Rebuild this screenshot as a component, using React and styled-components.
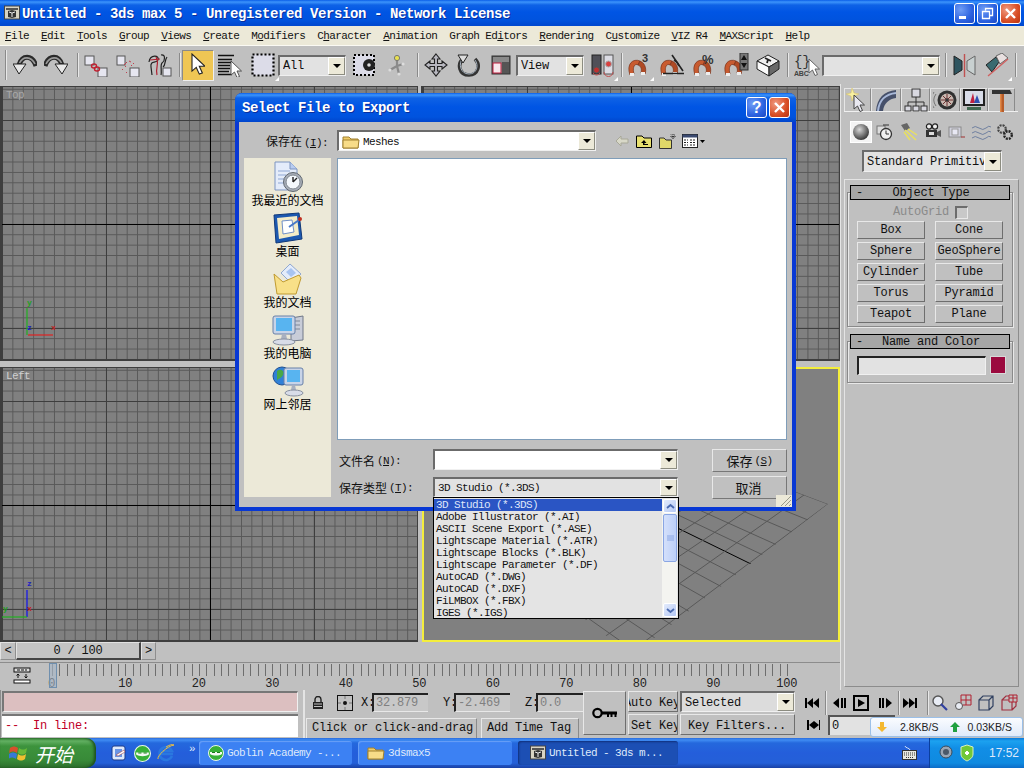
import styled, { createGlobalStyle } from "styled-components"

const mono = `"Liberation Mono", "Noto Sans CJK SC", monospace`
const cjk = `"Noto Sans CJK SC", "Liberation Sans", sans-serif`
const panel = "#c0c0c0"

const Global = createGlobalStyle`
  html, body { margin: 0; padding: 0; background: ${panel}; }
  * { box-sizing: border-box; }
  svg { display: block; }
`

const Screen = styled.div`
  position: relative;
  width: 1024px;
  height: 768px;
  overflow: hidden;
  display: flex;
  flex-direction: column;
  background: ${panel};
  font-family: ${mono};
  font-size: 12px;
  letter-spacing: -0.2px;
  color: #111;
`

/* ---------- window chrome ---------- */
const TitleBar = styled.div`
  flex: none;
  height: 26px;
  display: flex;
  align-items: center;
  padding: 0 3px 0 4px;
  background: linear-gradient(#0a5ee8 0, #3c94fb 2px, #0e62e6 5px, #0055e4 12px, #0053de 20px, #0049d0 25px);
`
const TitleText = styled.span`
  flex: 1;
  margin: 1px 0 0 2px;
  color: #fff;
  font-weight: 700;
  font-size: 14px;
  letter-spacing: -0.4px;
  white-space: pre;
  text-shadow: 1px 1px 0 #0a2f9c;
`
const WinButton = styled.div`
  width: 21px;
  height: 21px;
  margin-left: ${(p) => p.$ml || 2}px;
  border: 1px solid #fff;
  border-radius: 3px;
  display: flex;
  align-items: center;
  justify-content: center;
  color: #fff;
  font: 700 16px "Liberation Sans", sans-serif;
  background: ${(p) =>
    p.$red
      ? "radial-gradient(circle at 30% 30%, #f09a80, #d84e25 60%, #b8320f)"
      : "radial-gradient(circle at 30% 30%, #6f9df5, #2c62e0 60%, #1c49c4)"};
`
const MenuBar = styled.div`
  flex: none;
  height: 20px;
  display: flex;
  align-items: center;
  gap: 12px;
  padding-left: 5px;
  background: #ece9d8;
  border-bottom: 1px solid #fbfaf4;
  font-size: 11px;
  letter-spacing: -0.6px;
  white-space: pre;
`
const Toolbar = styled.div`
  flex: none;
  height: 38px;
  display: flex;
  align-items: center;
  background: ${panel};
`
const Tool = styled.div`
  position: relative;
  flex: none;
  width: ${(p) => p.$w}px;
  height: ${(p) => p.$h || 24}px;
  margin-left: ${(p) => p.$ml || 0}px;
  display: flex;
  align-items: center;
  justify-content: center;
  ${(p) => p.$on && `background:#efc654;border:1px solid #8a8a8a;border-right-color:#eee;border-bottom-color:#eee;`}
  ${(p) =>
    p.$fly &&
    `&::after{content:"";position:absolute;right:-3px;bottom:-4px;border-left:4px solid transparent;border-bottom:4px solid #fff;}`}
`
const Separator = styled.div`
  flex: none;
  width: 2px;
  height: 24px;
  margin-left: ${(p) => p.$ml}px;
  border-left: 1px solid #8a8a8a;
  border-right: 1px solid #e8e8e8;
`
const Grip = styled(Separator)`
  height: 30px;
`

/* ---------- dropdown used everywhere ---------- */
const ComboBox = styled.div`
  flex: none;
  position: relative;
  width: ${(p) => p.$w}px;
  height: ${(p) => p.$h || 21}px;
  margin-left: ${(p) => p.$ml || 0}px;
  display: flex;
  align-items: center;
  padding-left: 3px;
  background: ${(p) => p.$bg || "#e2e2e2"};
  border-top: 2px solid #6b6b6b;
  border-left: 2px solid #6b6b6b;
  border-right: 1px solid #f0f0f0;
  border-bottom: 1px solid #f0f0f0;
  white-space: pre;
  font-size: ${(p) => p.$fs || 12}px;
  letter-spacing: ${(p) => (p.$fs === 11 ? "-0.6px" : "-0.2px")};
`
const ComboValue = styled.span`
  flex: 1;
  overflow: hidden;
  padding-top: 1px;
`
const ComboArrow = styled.div`
  flex: none;
  width: 17px;
  height: 100%;
  display: flex;
  align-items: center;
  justify-content: center;
  background: #ece9d8;
  border: 1px solid #fff;
  border-right-color: #8c8c80;
  border-bottom-color: #8c8c80;
  &::before {
    content: "";
    border-left: 4px solid transparent;
    border-right: 4px solid transparent;
    border-top: 4px solid #000;
  }
`
function Combo({ w, h, ml, bg, fs, children }) {
  return (
    <ComboBox $w={w} $h={h} $ml={ml} $bg={bg} $fs={fs}>
      <ComboValue>{children}</ComboValue>
      <ComboArrow />
    </ComboBox>
  )
}

/* ---------- centre of the screen ---------- */
const Work = styled.div`
  flex: none;
  height: 606px;
  display: flex;
`
const LeftSide = styled.div`
  flex: none;
  width: 840px;
  display: flex;
  flex-direction: column;
`
const ViewGrid = styled.div`
  flex: none;
  height: 558px;
  padding-top: 2px;
  display: grid;
  grid-template-columns: 418px 419px;
  grid-template-rows: 275px 275px;
  column-gap: 3px;
  row-gap: 6px;
  background: ${panel};
`
const Viewport = styled.div`
  position: relative;
  overflow: hidden;
  background-color: #808080;
  border: 2px solid #3e3e3e;
  border-top-width: 1px;
  border-right-width: 1px;
  background-image: linear-gradient(#000, #000), linear-gradient(#000, #000),
    linear-gradient(to right, #3e3e3e 1px, transparent 1px),
    linear-gradient(#3e3e3e 1px, transparent 1px),
    linear-gradient(to right, #585858 1px, transparent 1px),
    linear-gradient(#585858 1px, transparent 1px);
  background-repeat: no-repeat, no-repeat, repeat, repeat, repeat, repeat;
  background-size: 1px 100%, 100% 1px, 104px 100%, 100% 104px, 10.4px 100%, 100% 10.4px;
  background-position: 208px 0, 0 ${(p) => p.$cy}px, 0 0, 0 ${(p) => p.$cy % 104}px, 0 0,
    0 ${(p) => p.$cy % 10.4}px;
`
const Perspective = styled.div`
  position: relative;
  overflow: hidden;
  background: #808080;
  border: 2px solid #f4ee3c;
  margin-left: 1px;
`
const ViewLabel = styled.span`
  position: absolute;
  left: 4px;
  top: 2px;
  color: ${(p) => p.$c};
  font-size: 11px;
  letter-spacing: -0.6px;
`
const Tripod = styled.div`
  position: absolute;
  left: ${(p) => p.$l}px;
  bottom: ${(p) => p.$b}px;
`
const TimeRow = styled.div`
  flex: none;
  height: 21px;
  display: flex;
  align-items: flex-start;
  background: ${panel};
  border-bottom: 1px solid #8c8c8c;
`
const TimeStep = styled.div`
  flex: none;
  width: ${(p) => p.$w}px;
  height: 18px;
  display: flex;
  align-items: center;
  justify-content: center;
  border: 1px solid #e2e2e2;
  border-right-color: #8e8e8e;
  border-bottom-color: #8e8e8e;
`
const TimeThumb = styled(TimeStep)`
  background: #c4c4c4;
  border-right: 2px solid #444;
  border-bottom: 2px solid #444;
`
const TrackBar = styled.div`
  flex: none;
  position: relative;
  height: 27px;
  display: flex;
  flex-direction: column;
`
const KeyToggle = styled.div`
  position: absolute;
  left: 13px;
  top: 4px;
`
const Ticks = styled.div`
  flex: none;
  width: 737px;
  height: 12px;
  margin: 1px 0 0 52px;
  background: repeating-linear-gradient(to right, #6e6e6e 0 1px, transparent 1px 7.35px);
`
const TickLabels = styled.div`
  display: grid;
  grid-template-columns: repeat(11, 73.5px);
  margin: 1px 0 0 15px;
  font-size: 12px;
  line-height: 14px;
  text-align: center;
  color: #222;
`
const TimeCursor = styled.div`
  position: absolute;
  left: 49px;
  top: 0;
  width: 8px;
  height: 25px;
  background: #a6b6c6aa;
  border: 1px solid #6f8fae;
`

/* ---------- command panel ---------- */
const CommandPanel = styled.div`
  flex: none;
  width: 184px;
  position: relative;
  padding: 4px 6px 0 5px;
  display: flex;
  flex-direction: column;
  background: ${panel};
  border-left: 1px solid #e4e4e4;
`
const PanelTabs = styled.div`
  flex: none;
  height: 24px;
  display: flex;
  margin-left: -2px;
  border-bottom: 1px solid #f0f0f0;
`
const PanelTab = styled.div`
  flex: none;
  width: ${(p) => p.$w}px;
  display: flex;
  align-items: center;
  justify-content: center;
  border-right: 1px solid #8a8a8a;
  border-top: 1px solid #e6e6e6;
  border-left: 1px solid #e6e6e6;
`
const SubTabs = styled.div`
  flex: none;
  height: 22px;
  margin-top: 9px;
  display: flex;
  align-items: center;
  padding-left: 4px;
`
const SubTab = styled.div`
  flex: none;
  width: ${(p) => p.$w || 24}px;
  height: 22px;
  margin-left: ${(p) => p.$ml || 0}px;
  display: flex;
  align-items: center;
  justify-content: center;
  ${(p) => p.$on && `background:#f4f4f4;border:1px solid #fff;`}
`
const TypeRow = styled.div`
  flex: none;
  margin: 7px 0 7px 16px;
`
const RollupPanel = styled.div`
  flex: 1;
  margin: 0 -1px 3px -2px;
  padding: 5px 5px 0 2px;
  border: 1px solid #e4e4e4;
  border-bottom-color: #8c8c8c;
  border-right-color: #8c8c8c;
  display: flex;
  flex-direction: column;
`
const Rollup = styled.div`
  flex: none;
  margin-bottom: ${(p) => p.$mb || 0}px;
`
const RollupHead = styled.div`
  position: relative;
  z-index: 1;
  height: 15px;
  margin: 0 3px 0 3px;
  display: flex;
  align-items: center;
  padding: 1px 0 0 5px;
  background: #a6a6a6;
  border: 1px solid #000;
  white-space: pre;
`
const RollupName = styled.span`
  flex: 1;
  text-align: center;
  padding-right: ${(p) => p.$pr || 0}px;
`
const RollupBody = styled.div`
  margin-top: -8px;
  padding: ${(p) => p.$pt || 10}px 6px 3px 9px;
  border: 1px solid #8a8a8a;
  box-shadow: 1px 1px 0 #e8e8e8 inset, 1px 1px 0 #e8e8e8;
`
const AutoRow = styled.div`
  height: 18px;
  display: flex;
  align-items: center;
  justify-content: center;
  gap: 6px;
  padding-right: 2px;
  color: #8a8a8a;
`
const CheckBox = styled.div`
  width: 13px;
  height: 13px;
  border: 1px solid #e8e8e8;
  border-top: 2px solid #6c6c6c;
  border-left: 2px solid #6c6c6c;
  background: #c8c8c8;
`
const PrimGrid = styled.div`
  display: grid;
  grid-template-columns: 68px 68px;
  grid-auto-rows: 18px;
  column-gap: 10px;
  row-gap: 3px;
`
const MaxButton = styled.div`
  display: flex;
  align-items: center;
  justify-content: center;
  background: ${panel};
  border: 1px solid #e8e8e8;
  border-right-color: #6e6e6e;
  border-bottom-color: #6e6e6e;
  white-space: pre;
  overflow: hidden;
`
const NameRow = styled.div`
  display: flex;
  gap: 4px;
  padding-bottom: 4px;
`
const NameField = styled.div`
  width: 130px;
  height: 19px;
  background: #e2e2e2;
  border-top: 2px solid #222;
  border-left: 2px solid #222;
  border-right: 1px solid #f0f0f0;
  border-bottom: 1px solid #f0f0f0;
`
const Swatch = styled.div`
  width: 16px;
  height: 18px;
  background: #9b0a3e;
  border: 1px solid #d8d8d8;
`

/* ---------- status strip ---------- */
const StatusStrip = styled.div`
  flex: none;
  height: 48px;
  display: flex;
  background: ${panel};
`
const Prompt = styled.div`
  flex: none;
  width: 305px;
  padding: 1px 5px 0 2px;
  border-right: 2px solid #e4e4e4;
  box-shadow: 1px 0 0 #8c8c8c inset;
`
const PinkLine = styled.div`
  height: 21px;
  background: #dcbfc0;
  border: 1px solid #f0f0f0;
  border-top: 2px solid #777;
  border-left: 2px solid #777;
`
const ListenerLine = styled.div`
  height: 23px;
  margin-top: 2px;
  padding: 3px 0 0 3px;
  background: #fff;
  color: #c00028;
  border-top: 2px solid #777;
  white-space: pre;
`
const CoordArea = styled.div`
  flex: none;
  width: 278px;
  display: flex;
  flex-direction: column;
  padding-top: 3px;
`
const CoordRow = styled.div`
  height: 19px;
  display: flex;
  align-items: center;
`
const CoordName = styled.span`
  flex: none;
  width: 11px;
  margin-left: ${(p) => p.$ml}px;
`
const CoordInput = styled.div`
  flex: none;
  width: ${(p) => p.$w}px;
  height: 19px;
  padding-left: 2px;
  display: flex;
  align-items: center;
  color: #808080;
  background: #c8c8c8;
  border-top: 2px solid #222;
  border-left: 2px solid #222;
  border-bottom: 1px solid #e8e8e8;
  white-space: pre;
`
const PromptBoxes = styled.div`
  margin-top: 6px;
  display: flex;
  gap: 4px;
  padding-left: 1px;
`
const TextBox = styled.div`
  flex: none;
  width: ${(p) => p.$w}px;
  height: 20px;
  padding: 0 0 1px 5px;
  display: flex;
  align-items: center;
  border: 1px solid #e8e8e8;
  border-right-color: #8a8a8a;
  border-bottom: none;
  white-space: pre;
`
const KeyButton = styled(MaxButton)`
  flex: none;
  width: 43px;
  height: 44px;
  margin-top: 1px;
`
const KeyCol = styled.div`
  flex: none;
  width: ${(p) => p.$w}px;
  margin-left: ${(p) => p.$ml}px;
  padding-top: 1px;
  display: flex;
  flex-direction: column;
  gap: 2px;
`
const KeySmall = styled(MaxButton)`
  height: 21px;
  padding-top: 2px;
  justify-content: flex-start;
`
const KeyInner = styled.span`
  flex: none;
  margin-left: ${(p) => p.$ml}px;
`
const PlayArea = styled.div`
  flex: none;
  width: 229px;
  padding: 2px 0 0 8px;
  display: flex;
  flex-direction: column;
`
const PlayRow = styled.div`
  height: 22px;
  display: flex;
  align-items: center;
`
const FrameField = styled.div`
  flex: none;
  width: 67px;
  height: 20px;
  margin-left: 8px;
  padding-left: 2px;
  background: #e2e2e2;
  border-top: 2px solid #555;
  border-left: 2px solid #555;
  display: flex;
  align-items: center;
`
const PlayIcon = styled.div`
  flex: none;
  margin-left: ${(p) => p.$ml || 0}px;
`

/* ---------- taskbar ---------- */
const Taskbar = styled.div`
  flex: none;
  height: 30px;
  display: flex;
  align-items: center;
  color: #dfe9fb;
  font-size: 11px;
  letter-spacing: -0.6px;
  white-space: pre;
  background: linear-gradient(#2a6bdc 0, #3f8cf3 2px, #2468dd 5px, #245edb 15px, #2460d8 25px, #1941a5 30px);
`
const StartButton = styled.div`
  flex: none;
  width: 96px;
  height: 30px;
  padding-left: 9px;
  display: flex;
  align-items: center;
  gap: 6px;
  border-radius: 0 10px 10px 0;
  background: linear-gradient(#3c8c3c 0, #62b062 3px, #3d933d 8px, #388a38 22px, #2c6f2c 30px);
  box-shadow: inset -2px 0 3px #1d4f1d;
`
const StartLabel = styled.span`
  color: #fff;
  font: italic 400 19px ${cjk};
  letter-spacing: 0;
`
const Quick = styled.div`
  flex: none;
  width: 103px;
  display: flex;
  align-items: center;
  gap: 6px;
  padding-left: 14px;
`
const Chevron = styled.span`
  margin: -8px 0 0 8px;
  font-size: 11px;
  color: #dfe9fb;
`
const TaskButton = styled.div`
  flex: none;
  width: ${(p) => p.$w}px;
  height: 24px;
  margin-right: ${(p) => p.$mr}px;
  padding-left: ${(p) => (p.$active ? 12 : 9)}px;
  display: flex;
  align-items: center;
  gap: 3px;
  border-radius: 3px;
  background: ${(p) => (p.$active ? "#1c4fb4" : "#3c81f3")};
  box-shadow: ${(p) => (p.$active ? "inset 1px 1px 2px #10307a" : "inset 1px 1px 1px #6aa0f7")};
`
const TaskSpacer = styled.div`
  flex: 1;
`
const KeyboardTray = styled.div`
  flex: none;
  margin-right: 12px;
`
const Tray = styled.div`
  flex: none;
  width: 95px;
  height: 30px;
  padding-left: 9px;
  display: flex;
  align-items: center;
  gap: 4px;
  font: 12px "Liberation Sans", sans-serif;
  letter-spacing: 0;
  border-left: 1px solid #0a3f9e;
  background: linear-gradient(#0c78d8 0, #1ca2f0 3px, #118ee6 10px, #0f8ae0 25px, #0c6cc8 30px);
`
const Clock = styled.span`
  margin-left: 10px;
`
const SpeedTip = styled.div`
  position: absolute;
  left: 870px;
  top: 717px;
  width: 153px;
  height: 20px;
  display: flex;
  align-items: center;
  padding-left: 4px;
  font: 10.5px "Liberation Sans", sans-serif;
  letter-spacing: 0;
  white-space: pre;
  color: #222;
  border: 1px solid #9cc0e8;
  border-radius: 3px;
  background: linear-gradient(#fafcff, #dfeafa);
`
const SpeedValue = styled.span`
  margin-left: ${(p) => p.$ml}px;
`
const SpeedArrow = styled.div`
  flex: none;
  margin-left: ${(p) => p.$ml || 0}px;
`

/* ---------- export dialog ---------- */
const Dialog = styled.div`
  position: absolute;
  left: 235px;
  top: 93px;
  width: 561px;
  height: 418px;
  display: flex;
  flex-direction: column;
  background: ${panel};
  border: 4px solid #0838d4;
  border-top: none;
  border-radius: 7px 7px 0 0;
`
const DialogTitle = styled.div`
  flex: none;
  height: 29px;
  margin: 0 -4px;
  padding: 0 6px 0 7px;
  display: flex;
  align-items: center;
  border-radius: 7px 7px 0 0;
  background: linear-gradient(#0a5ee8 0, #3c94fb 2px, #0e62e6 5px, #0055e4 14px, #0053de 24px, #0045cc 29px);
`
const DialogName = styled.span`
  flex: 1;
  margin-top: 1px;
  color: #fff;
  font-weight: 700;
  font-size: 14px;
  letter-spacing: -0.4px;
  text-shadow: 1px 1px 0 #0a2f9c;
`
const DialogBody = styled.div`
  padding: 8px 0 0 5px;
  display: flex;
  flex-direction: column;
`
const LookRow = styled.div`
  display: flex;
  align-items: center;
  height: 21px;
`
const LookLabel = styled.div`
  flex: none;
  width: 84px;
  text-align: right;
  white-space: pre;
  font-size: 11px;
  letter-spacing: -0.6px;
`
const Cjk = styled.span`
  margin-right: 2px;
  font-family: ${cjk};
  font-size: ${(p) => p.$fs || 12}px;
  letter-spacing: 0;
`
const NavIcon = styled.div`
  flex: none;
  margin-left: ${(p) => p.$ml}px;
`
const FolderName = styled.span`
  display: flex;
  align-items: center;
  gap: 3px;
`
const MiddleRow = styled.div`
  margin-top: 7px;
  display: flex;
  gap: 6px;
`
const PlacesBar = styled.div`
  flex: none;
  width: 87px;
  height: 339px;
  padding-top: 3px;
  background: #ece9d8;
`
const Place = styled.div`
  height: 51px;
  display: flex;
  flex-direction: column;
  align-items: center;
  font: 12px/15px ${cjk};
  letter-spacing: 0;
  color: #000;
`
const PlaceName = styled.span`
  margin-top: -1px;
  white-space: pre;
`
const FileColumn = styled.div`
  flex: none;
  width: 450px;
  display: flex;
  flex-direction: column;
`
const FileList = styled.div`
  height: 282px;
  background: #fff;
  border: 1px solid #7f9db9;
`
const SaveForm = styled.div`
  margin-top: 9px;
  display: grid;
  grid-template-columns: 96px 245px 34px 75px;
  grid-template-rows: 23px 23px;
  row-gap: 4px;
`
const FormLabel = styled.div`
  grid-column: 1;
  padding-left: 2px;
  display: flex;
  align-items: center;
  white-space: pre;
  font-size: 11px;
  letter-spacing: -0.6px;
`
const FormCombo = styled.div`
  grid-column: 2;
  margin-top: ${(p) => p.$mt || 0}px;
`
const DialogButton = styled(MaxButton)`
  grid-column: 4;
  font-size: 11px;
  letter-spacing: -0.6px;
  border-color: #e8e8e8 #777 #777 #e8e8e8;
`
const TypeList = styled.div`
  position: absolute;
  left: 194px;
  top: 404px;
  width: 246px;
  height: 122px;
  display: flex;
  padding: 1px 1px 1px 0;
  background: #e4e4e4;
  border: 1px solid #000;
`
const TypeRows = styled.div`
  flex: 1;
  font-size: 11px;
  letter-spacing: -0.6px;
  white-space: pre;
`
const TypeOption = styled.div`
  height: 12px;
  line-height: 12px;
  padding-left: 2px;
  ${(p) => p.$on && `background:#2a55c4;color:#dfe6fa;`}
`
const ScrollBar = styled.div`
  flex: none;
  width: 15px;
  display: flex;
  flex-direction: column;
  justify-content: space-between;
  background: #f4f4f0;
  position: relative;
`
const ScrollButton = styled.div`
  width: 14px;
  height: 14px;
  margin-left: 1px;
  border: 1px solid #fff;
  border-radius: 2px;
  background: linear-gradient(135deg, #e4ecfc, #b4c8f4);
  display: flex;
  align-items: center;
  justify-content: center;
`
const ScrollThumb = styled.div`
  width: 14px;
  height: 48px;
  margin: 1px 0 0 1px;
  border: 1px solid #8aa6e4;
  border-radius: 2px;
  background: linear-gradient(to right, #d4e0fb, #bccff8);
  display: flex;
  align-items: center;
  justify-content: center;
`
const ScrollTop = styled.div`
  display: flex;
  flex-direction: column;
`
const ResizeGrip = styled.div`
  position: absolute;
  right: 0;
  bottom: 0;
  width: 16px;
  height: 12px;
  background: #ece9d8;
`

/* ---------- drawings ---------- */
const Ico = ({ w = 24, h = 24, children }) => (
  <svg width={w} height={h} viewBox={`0 0 ${w} ${h}`}>
    {children}
  </svg>
)
const Arrowhead = "M0 0 L0 14 L3.5 11 L6 16.5 L8.5 15.5 L6 10 L10.5 10 Z"

const UndoIcon = ({ flip }) => (
  <Ico>
    <g transform={flip ? "matrix(-1 0 0 1 24 0)" : undefined}>
      <path d="M6 12 C9 2 19 1 23 13" fill="none" stroke="#2a2a2a" strokeWidth="5" />
      <path d="M6.5 10 C10 3 18 3 22 11" fill="none" stroke="#9a9a9a" strokeWidth="1.6" />
      <path d="M0 11 L13 11 L6 21 Z" fill="#e8e8e8" stroke="#222" />
    </g>
  </Ico>
)
const LinkIcon = () => (
  <Ico>
    <rect x="1" y="3" width="9" height="9" fill="#e6e6f0" stroke="#555" />
    <rect x="14" y="15" width="9" height="9" fill="#e6e6f0" stroke="#555" />
    <ellipse cx="10" cy="13" rx="2.5" ry="2" fill="none" stroke="#c02030" strokeWidth="1.4" />
    <ellipse cx="13" cy="16" rx="2.5" ry="2" fill="none" stroke="#c02030" strokeWidth="1.4" />
  </Ico>
)
const UnlinkIcon = () => (
  <Ico>
    <rect x="1" y="3" width="8" height="9" fill="#e6e6f0" stroke="#555" />
    <rect x="14" y="15" width="9" height="9" fill="#e6e6f0" stroke="#555" />
    <path d="M8 12 L11 9 M13 8 L15 9 M17 10 L18 11 M9 14 L10 13 M6 17 L7 16 M10 20 L11 19 M15 13 L16 12" stroke="#c04050" strokeWidth="1" />
  </Ico>
)
const BindIcon = () => (
  <Ico>
    <path d="M1 9 C2 1 12 2 10 7 C8 11 2 7 3 14 L4 22" fill="none" stroke="#222" strokeWidth="1.2" />
    <path d="M2 7 L12 6 M8 4 C12 10 7 14 9 22" fill="none" stroke="#b02030" strokeWidth="1.2" />
    <path d="M13 2 C18 1 17 8 14 10 C12 12 14 18 13 22 M19 4 C16 8 18 12 15 14" fill="none" stroke="#222" strokeWidth="1.2" />
    <rect x="15" y="15" width="8" height="8" fill="#e6e6f0" stroke="#555" />
  </Ico>
)
const CursorIcon = () => (
  <Ico w="14" h="24">
    <g transform="translate(1 1) scale(1.22)">
      <path d={Arrowhead} fill="#fff" stroke="#222" strokeWidth="0.9" />
    </g>
  </Ico>
)
const ByNameIcon = () => (
  <Ico>
    <path d="M0 2.5 H16 M0 6.5 H14 M0 9.5 H14 M0 12.5 H12 M0 15.5 H12 M0 18.5 H11 M0 21.5 H14" stroke="#111" strokeWidth="1.4" />
    <g transform="translate(13 8)">
      <path d={Arrowhead} fill="#fff" stroke="#444" strokeWidth="0.9" />
    </g>
  </Ico>
)
const RegionIcon = () => (
  <Ico w="24">
    <rect x="1.5" y="1.5" width="21" height="21" fill="#dcdce8" stroke="#000" strokeWidth="2.2" strokeDasharray="2 2" />
  </Ico>
)
const WindowIcon = () => (
  <Ico>
    <rect x="1" y="2" width="20" height="20" fill="#dcdce8" stroke="#000" strokeWidth="2" strokeDasharray="2 2" />
    <circle cx="16" cy="12" r="6" fill="#222" />
    <circle cx="16" cy="12" r="1.8" fill="#ddd" />
  </Ico>
)
const BoneIcon = () => (
  <Ico w="18">
    <path d="M9 6 L9 13 M9 13 L2 17 M9 13 L15 11 M9 13 L11 21" stroke="#8a8a8a" strokeWidth="2.2" />
    <circle cx="9" cy="5" r="2.6" fill="#e8e050" stroke="#777" />
    <circle cx="2" cy="17" r="1.6" fill="#ddd" />
    <circle cx="15" cy="11" r="1.6" fill="#ddd" />
    <circle cx="11" cy="21" r="1.6" fill="#ddd" />
  </Ico>
)
const MoveIcon = () => (
  <Ico>
    <path d="M12 1 L16 6 L13.5 6 L13.5 10.5 L18 10.5 L18 8 L23 12 L18 16 L18 13.5 L13.5 13.5 L13.5 18 L16 18 L12 23 L8 18 L10.5 18 L10.5 13.5 L6 13.5 L6 16 L1 12 L6 8 L6 10.5 L10.5 10.5 L10.5 6 L8 6 Z" fill="#b8b8c0" stroke="#222" strokeWidth="1.1" />
  </Ico>
)
const RotateIcon = () => (
  <Ico>
    <path d="M6 6 C0 11 2 22 12 22 C21 22 24 12 18 6" fill="none" stroke="#333" strokeWidth="3.6" />
    <path d="M6 5 C1 10 3 21 12 21 C20 21 22 12 18 7" fill="none" stroke="#a8b4c0" strokeWidth="1" />
    <path d="M1 2 L11 2 L6 10 Z" fill="#ddd" stroke="#222" />
  </Ico>
)
const ScaleIcon = () => (
  <Ico w="20">
    <rect x="1" y="3" width="18" height="18" fill="#555" stroke="#333" />
    <path d="M2 4 H18 V9 H11 V20 H2 Z" fill="#8a8a8a" />
    <rect x="2" y="10" width="8" height="10" fill="#f8e8ec" stroke="#c02040" />
  </Ico>
)
const PivotIcon = () => (
  <Ico>
    <rect x="1" y="2" width="9" height="19" fill="#505058" stroke="#222" />
    <rect x="13" y="2" width="9" height="19" fill="#dcdce4" stroke="#555" />
    <circle cx="5.5" cy="17" r="3" fill="#c03030" stroke="#555" />
    <circle cx="17.5" cy="11" r="3" fill="#d84040" stroke="#aaa" />
    <path d="M2 20 A4 4 0 0 0 9 20 M13 19 A4 4 0 0 0 22 19" fill="none" stroke="#c05050" />
  </Ico>
)
const Magnet = () => (
  <g>
    <path d="M3 22 C-1 11 6 5 13 8 L11 12 C8 10 5 14 7 21 Z" fill="#c85b30" stroke="#7a3018" strokeWidth="0.7" />
    <path d="M13 8 C20 11 19 19 18 21 L14 20 C15 16 14 13 11 12 Z" fill="#b04a24" stroke="#7a3018" strokeWidth="0.7" />
    <rect x="3" y="20" width="4" height="3" fill="#eee" />
    <rect x="14" y="19" width="4" height="3" fill="#eee" />
  </g>
)
const SnapIcon = () => (
  <Ico>
    <Magnet />
    <text x="15" y="9" fontFamily="Liberation Sans" fontWeight="700" fontSize="11" fill="#333">3</text>
  </Ico>
)
const AngleIcon = () => (
  <Ico w="26">
    <Magnet />
    <path d="M13 2 L24 18 M4 20.5 H25" stroke="#222" strokeWidth="1.6" fill="none" />
    <path d="M15 7 A10 10 0 0 1 20 13" stroke="#222" strokeWidth="1.6" fill="none" />
  </Ico>
)
const PercentIcon = () => (
  <Ico>
    <Magnet />
    <text x="10" y="11" fontFamily="Liberation Sans" fontWeight="700" fontSize="13" fill="#333">%</text>
  </Ico>
)
const SpinSnapIcon = () => (
  <Ico w="26">
    <Magnet />
    <rect x="17" y="0" width="8" height="17" fill="#777" stroke="#333" />
    <path d="M21 2 L24 7 H18 Z M18 10 H24 L21 15 Z" fill="#111" />
  </Ico>
)
const BoxIcon = () => (
  <Ico>
    <path d="M12 2 L23 8 L13 14 L1 8 Z" fill="#f0f0f0" stroke="#222" />
    <path d="M1 8 L13 14 L13 23 L1 16 Z" fill="#fafafa" stroke="#222" />
    <path d="M13 14 L23 8 L23 16 L13 23 Z" fill="#686868" stroke="#222" />
    <path d="M9 5 L15 8 M12 6.5 L11 10" stroke="#222" strokeWidth="1.8" />
  </Ico>
)
const AbcIcon = () => (
  <Ico w="26">
    <text x="0" y="13" fontFamily="Liberation Mono" fontSize="14" fill="#333">{"{}"}</text>
    <text x="0" y="23" fontFamily="Liberation Sans" fontWeight="700" fontSize="7" fill="#444">ABC</text>
    <g transform="translate(15 6)">
      <path d={Arrowhead} fill="#fff" stroke="#555" strokeWidth="0.9" />
    </g>
  </Ico>
)
const MirrorIcon = () => (
  <Ico>
    <path d="M1 3 L9 8 L9 17 L1 22 Z" fill="#2e5560" stroke="#222" />
    <path d="M22 3 L14 8 L14 17 L22 22 Z" fill="#c8d0d0" stroke="#666" />
    <path d="M11.5 1 V24" stroke="#c05050" strokeWidth="1.4" />
  </Ico>
)
const AlignIcon = () => (
  <Ico>
    <path d="M1 12 L11 4 L14 9 L7 19 Z" fill="#3a6a70" stroke="#222" />
    <path d="M11 3 L17 0 L23 5 L15 11 Z" fill="#e8e0e0" stroke="#666" />
    <path d="M3 23 L23 6" stroke="#d06060" strokeWidth="1.4" />
  </Ico>
)

const StarTab = () => (
  <Ico>
    <path d="M6 0 L8 5 L13 6 L8 8 L6 13 L5 8 L0 6 L5 5 Z" fill="#f8f0a0" stroke="#d8c060" strokeWidth="0.5" />
    <g transform="translate(8 7)">
      <path d={Arrowhead} fill="#e8e8f0" stroke="#444" strokeWidth="1" />
    </g>
  </Ico>
)
const ArcTab = () => (
  <Ico>
    <path d="M2 23 C3 10 10 3 22 2 L22 10 C15 11 10 15 9 23 Z" fill="#46506a" />
    <path d="M4 23 C5 12 12 6 22 5" fill="none" stroke="#a8b8d8" strokeWidth="2" />
  </Ico>
)
const TreeTab = () => (
  <Ico>
    <path d="M12 9 V14 M4 18 V14 H20 V18 M12 14 V18" fill="none" stroke="#333" />
    <rect x="8" y="1" width="8" height="8" fill="#d8d8e0" stroke="#333" />
    <rect x="1" y="18" width="6" height="5" fill="#d8d8e0" stroke="#333" />
    <rect x="9" y="18" width="6" height="5" fill="#d8d8e0" stroke="#333" />
    <rect x="17" y="18" width="6" height="5" fill="#d8d8e0" stroke="#333" />
  </Ico>
)
const WheelTab = () => (
  <Ico>
    <path d="M3 6 A10 10 0 0 0 3 18 M1 4 A13 13 0 0 0 1 20" fill="none" stroke="#777" />
    <circle cx="14" cy="12" r="9.5" fill="#303030" />
    <circle cx="14" cy="12" r="6.5" fill="#c8b8b0" />
    <path d="M14 6 V18 M8 12 H20 M10 8 L18 16 M18 8 L10 16" stroke="#703030" />
    <circle cx="14" cy="12" r="1.8" fill="#333" />
  </Ico>
)
const MonitorTab = () => (
  <Ico>
    <rect x="1" y="1" width="22" height="17" fill="#202020" />
    <rect x="3" y="3" width="18" height="13" fill="#d8dce8" />
    <path d="M8 15 L11 5 L13 15 Z" fill="#c02040" />
    <path d="M12 15 L15 7 L18 15 Z" fill="#3050b0" />
    <path d="M5 19 H19 V22 H5 Z" fill="#406850" />
  </Ico>
)
const HammerTab = () => (
  <Ico>
    <path d="M2 2 H20 L22 6 H2 Z" fill="#333" />
    <rect x="10" y="6" width="4" height="18" fill="#b85c28" />
    <rect x="10" y="6" width="1.5" height="18" fill="#e08848" />
  </Ico>
)
const SphereSub = () => (
  <Ico w="18" h="18">
    <defs>
      <radialGradient id="sph" cx="0.4" cy="0.35" r="0.7">
        <stop offset="0" stopColor="#d8d8d8" />
        <stop offset="1" stopColor="#303030" />
      </radialGradient>
    </defs>
    <circle cx="9" cy="9" r="8" fill="url(#sph)" />
  </Ico>
)
const ShapeSub = () => (
  <Ico w="18" h="18">
    <rect x="1" y="3" width="8" height="8" fill="#ddd" stroke="#777" />
    <circle cx="10" cy="11" r="5.5" fill="#f0f0f0" stroke="#333" strokeWidth="1.3" />
    <path d="M10 7.5 V11 H13 M7 2 H13" stroke="#333" fill="none" />
  </Ico>
)
const LightSub = () => (
  <Ico w="18" h="18">
    <path d="M1 2 L7 0 L10 5 L5 8 Z" fill="#666" />
    <path d="M5 7 L16 17 M8 6 L17 12 M4 9 L10 17" stroke="#e8e060" strokeWidth="1.5" />
  </Ico>
)
const CameraSub = () => (
  <Ico w="18" h="18">
    <circle cx="5" cy="3.5" r="2.6" fill="#eee" stroke="#222" strokeWidth="1.2" />
    <circle cx="11" cy="3.5" r="2.6" fill="#eee" stroke="#222" strokeWidth="1.2" />
    <rect x="2" y="7" width="11" height="7" fill="#333" />
    <path d="M13 9 L17 7 V14 L13 12 Z" fill="#555" />
    <rect x="5" y="9" width="5" height="3" fill="#ddd" />
  </Ico>
)
const HelperSub = () => (
  <Ico w="18" h="18">
    <rect x="1" y="4" width="12" height="10" fill="#d0d0dc" stroke="#8a8a8a" />
    <rect x="4" y="6" width="6" height="6" fill="#e8e8f4" stroke="#999" />
    <path d="M13 14 L17 14" stroke="#a03030" />
  </Ico>
)
const WavesSub = () => (
  <Ico w="20" h="18">
    <path d="M1 5 Q4 2 8 5 T15 5 T20 4 M1 10 Q4 7 8 10 T15 10 T20 9 M1 15 Q4 12 8 15 T15 15 T20 14" fill="none" stroke="#7080a0" />
  </Ico>
)
const GearsSub = () => (
  <Ico w="18" h="18">
    <circle cx="6" cy="6" r="3.8" fill="none" stroke="#444" strokeWidth="2.2" strokeDasharray="2 1" />
    <circle cx="12" cy="12" r="3.8" fill="none" stroke="#222" strokeWidth="2.4" strokeDasharray="2 1" />
  </Ico>
)

const LockIcon = () => (
  <Ico w="12" h="13">
    <path d="M3 6 V3.5 A3 3 0 0 1 9 3.5 V6" fill="none" stroke="#222" strokeWidth="1.4" />
    <rect x="1" y="6" width="10" height="7" fill="#222" />
    <path d="M2 8 H10 M2 10.5 H10" stroke="#c0c0c0" />
  </Ico>
)
const AbsIcon = () => (
  <Ico w="16" h="16">
    <rect x="0.5" y="0.5" width="15" height="15" fill="none" stroke="#111" />
    <circle cx="8" cy="8" r="2" fill="#111" />
    <path d="M8 1 V4 M8 12 V15 M1 8 H4 M12 8 H15" stroke="#777" />
  </Ico>
)
const KeyIcon = () => (
  <Ico w="26" h="14">
    <circle cx="5.5" cy="7" r="4.2" fill="none" stroke="#000" strokeWidth="2.2" />
    <path d="M10 7 H25" stroke="#000" strokeWidth="3" />
    <path d="M16 8 V11 M19.5 8 V11 M23.5 8 V11" stroke="#000" strokeWidth="2" />
  </Ico>
)
const Play = ({ d, w = 16, box }) => (
  <Ico w={w} h="16">
    {box && <rect x="1" y="1" width="14" height="14" fill="none" stroke="#000" strokeWidth="2" />}
    <path d={d} fill="#000" />
  </Ico>
)
const SearchIcon = () => (
  <Ico w="18" h="18">
    <circle cx="7" cy="7" r="5" fill="#e8ecf4" stroke="#555" strokeWidth="1.4" />
    <path d="M10 10 L16 16" stroke="#3040a0" strokeWidth="2.2" />
  </Ico>
)
const ZoomAllIcon = () => (
  <Ico w="18" h="18">
    <path d="M7 1 H17 V11 H7 Z M12 1 V11 M7 6 H17" fill="none" stroke="#b02030" />
    <circle cx="5" cy="12" r="3.5" fill="#e8ecf4" stroke="#555" />
  </Ico>
)
const CubeIcon = ({ red }) => (
  <Ico w="18" h="18">
    <path d="M2 6 H12 V16 H2 Z M2 6 L6 2 H16 V12 L12 16 M12 6 L16 2" fill="none" stroke={red ? "#a03040" : "#304060"} strokeWidth="1.2" />
    {red ? <path d="M9 1 H17 V8 H9 Z M9 4 H17 M13 1 V8" fill="#c0c0c0" stroke="#b02030" /> : null}
  </Ico>
)

const MaxLogo = () => (
  <Ico w="16" h="16">
    <rect x="0.5" y="1" width="15" height="13" fill="#d8d4c4" stroke="#444" />
    <rect x="2" y="3" width="12" height="2" fill="#555" />
    <path d="M4 6 L8 5 L12 6 V12 L8 13 L4 12 Z" fill="#333" />
    <path d="M5 7 L8 8 L11 7 M8 8 V12" stroke="#eee" />
  </Ico>
)
const MiniFolder = () => (
  <Ico w="18" h="16">
    <path d="M1 3 H7 L9 5 H16 V14 H1 Z" fill="#f0cc68" stroke="#a08030" />
    <path d="M1 6 H17 L16 14 H1 Z" fill="#f8dc88" stroke="#a08030" />
  </Ico>
)
const BackArrow = () => (
  <Ico w="14" h="12">
    <path d="M6 1 L1 6 L6 11 V8 H13 V4 H6 Z" fill="#d8d8c8" stroke="#a8a898" />
  </Ico>
)
const UpFolder = () => (
  <Ico w="16" h="14">
    <path d="M0.5 2 H6 L8 4 H15.5 V13.5 H0.5 Z" fill="#e8e070" stroke="#000" />
    <path d="M8 6 L5 9 H7 V11 H12 V10 H8.5 V9 H10.5 Z" fill="#000" />
  </Ico>
)
const NewFolder = () => (
  <Ico w="18" h="16">
    <path d="M0.5 5 H5 L7 7 H12.5 V15.5 H0.5 Z" fill="#e0d868" stroke="#333" />
    <path d="M14 1 V6 M11.5 3.5 H16.5 M12 1.5 L16 5.5 M16 1.5 L12 5.5" stroke="#222" strokeDasharray="1 1" />
  </Ico>
)
const ViewMenu = () => (
  <Ico w="24" h="14">
    <rect x="0.5" y="0.5" width="15" height="13" fill="#fff" stroke="#222" />
    <rect x="0.5" y="0.5" width="15" height="3" fill="#3a4a70" />
    <path d="M2 6 H6 M8 6 H14 M2 8.5 H6 M8 8.5 H14 M2 11 H6 M8 11 H14" stroke="#222" strokeDasharray="2 1" />
    <path d="M18 6 H23 L20.5 9 Z" fill="#000" />
  </Ico>
)
const RecentPlace = () => (
  <Ico w="32" h="32">
    <path d="M3 1 H18 L25 8 V29 H3 Z" fill="#e4ecfa" stroke="#7c94c0" />
    <path d="M18 1 V8 H25" fill="#b8ccf0" stroke="#7c94c0" />
    <path d="M6 10 H18 M6 14 H14 M6 18 H12 M6 22 H12" stroke="#90a8d4" />
    <circle cx="21" cy="21" r="9.5" fill="#a8aeb8" stroke="#606870" />
    <circle cx="21" cy="21" r="7" fill="#f4f8fc" stroke="#808890" />
    <path d="M21 21 L21 16 M21 21 L25 17" stroke="#222" strokeWidth="1.4" />
  </Ico>
)
const DesktopPlace = () => (
  <Ico w="32" h="32">
    <path d="M2 3 L27 1 L30 27 L4 31 Z" fill="#1c58b0" stroke="#103878" />
    <path d="M5 6 L25 4 L27 23 L7 27 Z" fill="#f4ecc8" />
    <path d="M10 9 L20 8 L22 20 L11 22 Z" fill="#fff" stroke="#7090c8" />
    <path d="M17 15 L27 8" stroke="#4878c8" strokeWidth="2" />
    <circle cx="28" cy="7" r="2" fill="#c03020" />
  </Ico>
)
const DocsPlace = () => (
  <Ico w="32" h="32">
    <path d="M9 10 L18 1 L29 11 L19 20 Z" fill="#e4ecfa" stroke="#90a8d0" />
    <path d="M14 9 L19 5 L24 10 L19 14 Z" fill="#a8c4f0" />
    <path d="M2 11 L11 19 L27 12 L29 15 L24 31 L5 31 Z" fill="#f8e088" stroke="#c09a30" />
  </Ico>
)
const ComputerPlace = () => (
  <Ico w="32" h="32">
    <path d="M19 4 L31 2 V26 L19 27 Z" fill="#c8ccd8" stroke="#707888" />
    <path d="M22 7 H28 M22 11 H28 M22 15 H28" stroke="#808898" />
    <rect x="1" y="2" width="22" height="18" rx="2" fill="#c8d4e8" stroke="#6880a8" />
    <rect x="4" y="4" width="16" height="13" fill="#58b4f0" />
    <path d="M10 20 H14 L15 25 H9 Z" fill="#a8b0c0" />
    <ellipse cx="12" cy="28" rx="11" ry="3" fill="#d8dce8" stroke="#8890a0" />
  </Ico>
)
const NetworkPlace = () => (
  <Ico w="32" h="32">
    <circle cx="10" cy="11" r="9" fill="#3080d8" stroke="#205090" />
    <path d="M5 6 C9 3 13 6 11 10 C9 14 6 13 5 16 Z M14 12 C17 11 18 14 16 17 Z" fill="#48a848" />
    <rect x="12" y="3" width="19" height="17" rx="2" fill="#c8d4e8" stroke="#6880a8" />
    <rect x="15" y="5" width="13" height="12" fill="#58b4f0" />
    <path d="M20 20 H23 L24 25 H19 Z" fill="#a8b0c0" />
    <ellipse cx="22" cy="28" rx="9" ry="3" fill="#d8dce8" stroke="#8890a0" />
  </Ico>
)
const XpFlag = () => (
  <Ico w="20" h="20">
    <path d="M1 5 C4 3 6 3 9 5 L8 10 C5 8 3 8 0 10 Z" fill="#d8502c" />
    <path d="M10 5 C13 7 15 7 18 5 L17 10 C14 12 12 12 9 10 Z" fill="#68b838" />
    <path d="M0 11 C3 9 5 9 8 11 L7 16 C4 14 2 14 -1 16 Z" fill="#3878d8" />
    <path d="M9 11 C12 13 14 13 17 11 L16 16 C13 18 11 18 8 16 Z" fill="#f0c030" />
  </Ico>
)
const GoblinIcon = ({ size = 16 }) => (
  <Ico w={size} h={size}>
    <g transform={`scale(${size / 16})`}>
      <circle cx="8" cy="8" r="7.5" fill="#38b038" stroke="#e8f8e8" />
      <path d="M2 7 H14 V9 C11 11 5 11 2 9 Z" fill="#f4f8f4" />
      <path d="M4 7.5 H7 M9 7.5 H12" stroke="#1a7a1a" />
    </g>
  </Ico>
)
const IeIcon = () => (
  <Ico w="18" h="18">
    <path d="M15 12 A6.5 6.5 0 1 1 15 7 H5 V10 H16" fill="none" stroke="#2a78e0" strokeWidth="2.6" />
    <path d="M1 15 C0 12 10 2 17 1 C15 0 12 1 9 3" fill="none" stroke="#f0c040" strokeWidth="1" />
  </Ico>
)
const ShowDesktop = () => (
  <Ico w="18" h="18">
    <rect x="2" y="2" width="13" height="14" rx="2" fill="#dfe9fb" stroke="#1a3a8a" />
    <path d="M5 5 H12 V13 H5 Z" fill="#6a94e4" />
    <path d="M6 11 L14 6 L15 8 L8 12 Z" fill="#fff" stroke="#a03030" strokeWidth="0.5" />
  </Ico>
)

function PerspectiveGrid() {
  const va = [-29, 182]
  const vb = [1500, 0]
  const rightEdge = [
    [828, 504], [808, 520], [792, 532], [777, 545], [763, 555], [751, 564], [736, 575],
    [722, 587], [705, 598], [690, 612], [672, 625], [655, 638], [636, 652],
  ]
  const topEdge = [828, 804, 782, 762, 743, 725, 708, 692, 677, 662, 648, 634, 621, 608, 596, 584]
  return (
    <svg width="414" height="271" viewBox="424 369 414 271">
      <defs>
        <clipPath id="floor">
          <polygon points="828,504 636,652 612,640 583,618 440,480 600,418" />
        </clipPath>
      </defs>
      <g clipPath="url(#floor)" stroke="#585858" strokeWidth="1">
        {rightEdge.map(([x, y], i) => {
          const t = 0.55
          return (
            <line
              key={x}
              x1={x}
              y1={y}
              x2={x + (va[0] - x) * t}
              y2={y + (va[1] - y) * t}
              stroke={i === 5 ? "#000" : undefined}
            />
          )
        })}
        {topEdge.map((x) => {
          const y = 504 - 0.376 * (828 - x)
          const t = -0.35
          return <line key={x} x1={x} y1={y} x2={x + (vb[0] - x) * t} y2={y + (vb[1] - y) * t} />
        })}
      </g>
    </svg>
  )
}

const axisText = { fontSize: 8, fontFamily: "Liberation Mono", fontWeight: 700 }
const AxisTop = () => (
  <Ico w="40" h="40">
    <path d="M7 9 V36" stroke="#20b020" strokeWidth="1.2" />
    <path d="M8 36 H33" stroke="#e02020" strokeWidth="1.2" />
    <text x="7" y="6" {...axisText} fill="#20a020">y</text>
    <text x="7" y="31" {...axisText} fill="#2020c0">z</text>
    <text x="31" y="31" {...axisText} fill="#c02020">x</text>
  </Ico>
)
const AxisLeft = () => (
  <Ico w="40" h="50">
    <path d="M25 12 V39" stroke="#2020e0" strokeWidth="1.4" />
    <path d="M0 39 H25" stroke="#20b020" strokeWidth="1.2" />
    <text x="25" y="8" {...axisText} fill="#2020c0">z</text>
    <text x="1" y="33" {...axisText} fill="#20a020">y</text>
    <text x="25" y="33" {...axisText} fill="#c02020">x</text>
  </Ico>
)

const menus = [
  ["", "F", "ile"], ["", "E", "dit"], ["", "T", "ools"], ["", "G", "roup"], ["", "V", "iews"],
  ["", "C", "reate"], ["M", "o", "difiers"], ["C", "h", "aracter"], ["", "A", "nimation"],
  ["Graph Ed", "i", "tors"], ["", "R", "endering"], ["C", "u", "stomize"], ["", "V", "IZ R4"],
  ["", "M", "AXScript"], ["", "H", "elp"],
]
const prims = ["Box", "Cone", "Sphere", "GeoSphere", "Cylinder", "Tube", "Torus", "Pyramid", "Teapot", "Plane"]
const types = [
  "3D Studio (*.3DS)", "Adobe Illustrator (*.AI)", "ASCII Scene Export (*.ASE)",
  "Lightscape Material (*.ATR)", "Lightscape Blocks (*.BLK)", "Lightscape Parameter (*.DF)",
  "AutoCAD (*.DWG)", "AutoCAD (*.DXF)", "FiLMBOX (*.FBX)", "IGES (*.IGS)",
]
const places = [
  [<RecentPlace key="r" />, "我最近的文档"], [<DesktopPlace key="d" />, "桌面"], [<DocsPlace key="m" />, "我的文档"],
  [<ComputerPlace key="c" />, "我的电脑"], [<NetworkPlace key="n" />, "网上邻居"],
]

export default function App() {
  return (
    <Screen>
      <Global />
      <TitleBar>
        <MaxLogo />
        <TitleText>Untitled - 3ds max 5 - Unregistered Version - Network License</TitleText>
        <WinButton>
          <svg width="13" height="13"><rect x="1" y="9" width="7" height="3" fill="#fff" /></svg>
        </WinButton>
        <WinButton>
          <svg width="13" height="13"><path d="M4.5 3.5 V1.5 H11.5 V8.5 H9 M1.5 4.5 H8.5 V11.5 H1.5 Z" fill="none" stroke="#fff" strokeWidth="1.3" /></svg>
        </WinButton>
        <WinButton $red>
          <svg width="13" height="13"><path d="M2 2 L11 11 M11 2 L2 11" stroke="#fff" strokeWidth="2.4" /></svg>
        </WinButton>
      </TitleBar>

      <MenuBar>
        {menus.map(([a, u, b]) => (
          <span key={a + u + b}>{a}<u>{u}</u>{b}</span>
        ))}
      </MenuBar>

      <Toolbar>
        <Grip $ml={5} />
        <Tool $w={24} $ml={6}><UndoIcon /></Tool>
        <Tool $w={24} $ml={7}><UndoIcon flip /></Tool>
        <Separator $ml={9} />
        <Tool $w={24} $ml={5}><LinkIcon /></Tool>
        <Tool $w={24} $ml={8}><UnlinkIcon /></Tool>
        <Tool $w={24} $ml={8}><BindIcon /></Tool>
        <Separator $ml={7} />
        <Tool $w={32} $h={31} $ml={1} $on><CursorIcon /></Tool>
        <Tool $w={24} $ml={4}><ByNameIcon /></Tool>
        <Tool $w={26} $ml={8} $fly><RegionIcon /></Tool>
        <Combo w={68} ml={2}>All</Combo>
        <Tool $w={24} $ml={7}><WindowIcon /></Tool>
        <Tool $w={18} $ml={11}><BoneIcon /></Tool>
        <Separator $ml={11} />
        <Tool $w={24} $ml={5}><MoveIcon /></Tool>
        <Tool $w={24} $ml={9}><RotateIcon /></Tool>
        <Tool $w={20} $ml={10}><ScaleIcon /></Tool>
        <Combo w={68} ml={5}>View</Combo>
        <Tool $w={24} $ml={7} $fly><PivotIcon /></Tool>
        <Separator $ml={6} />
        <Tool $w={24} $ml={4} $fly><SnapIcon /></Tool>
        <Tool $w={26} $ml={8}><AngleIcon /></Tool>
        <Tool $w={24} $ml={7}><PercentIcon /></Tool>
        <Tool $w={26} $ml={7}><SpinSnapIcon /></Tool>
        <Tool $w={24} $ml={7}><BoxIcon /></Tool>
        <Separator $ml={7} />
        <Tool $w={26} $ml={5}><AbcIcon /></Tool>
        <Combo w={118} ml={2} />
        <Separator $ml={5} />
        <Tool $w={24} $ml={6}><MirrorIcon /></Tool>
        <Tool $w={24} $ml={8} $fly><AlignIcon /></Tool>
        <Separator $ml={6} />
      </Toolbar>

      <Work>
        <LeftSide>
          <ViewGrid>
            <Viewport $cy={137}>
              <ViewLabel $c="#a8a8a8">Top</ViewLabel>
              <Tripod $l={18} $b={20}><AxisTop /></Tripod>
            </Viewport>
            <Viewport $cy={137} />
            <Viewport $cy={137}>
              <ViewLabel $c="#cfcfcf">Left</ViewLabel>
              <Tripod $l={0} $b={12}><AxisLeft /></Tripod>
            </Viewport>
            <Perspective><PerspectiveGrid /></Perspective>
          </ViewGrid>
          <TimeRow>
            <TimeStep $w={16}>&lt;</TimeStep>
            <TimeThumb $w={125}>0 / 100</TimeThumb>
            <TimeStep $w={15}>&gt;</TimeStep>
          </TimeRow>
          <TrackBar>
            <KeyToggle>
              <svg width="18" height="17" viewBox="0 0 18 17">
                <rect x="1" y="1" width="16" height="4" fill="#ddd" stroke="#111" />
                <path d="M4 3 H14" stroke="#111" strokeDasharray="3 1" />
                <path d="M5 7 V11 M3.5 8.5 L5 7 L6.5 8.5 M13 7 V11 M11.5 9.5 L13 11 L14.5 9.5" stroke="#111" fill="none" />
                <rect x="1" y="13" width="16" height="3" fill="#fff" stroke="#111" />
              </svg>
            </KeyToggle>
            <Ticks />
            <TickLabels>
              {[0, 10, 20, 30, 40, 50, 60, 70, 80, 90, 100].map((n) => (
                <span key={n}>{n}</span>
              ))}
            </TickLabels>
            <TimeCursor />
          </TrackBar>
        </LeftSide>

        <CommandPanel>
          <PanelTabs>
            <PanelTab $w={27}><StarTab /></PanelTab>
            <PanelTab $w={30}><ArcTab /></PanelTab>
            <PanelTab $w={29}><TreeTab /></PanelTab>
            <PanelTab $w={30}><WheelTab /></PanelTab>
            <PanelTab $w={28}><MonitorTab /></PanelTab>
            <PanelTab $w={27}><HammerTab /></PanelTab>
          </PanelTabs>
          <SubTabs>
            <SubTab $on $w={22}><SphereSub /></SubTab>
            <SubTab $ml={1}><ShapeSub /></SubTab>
            <SubTab><LightSub /></SubTab>
            <SubTab><CameraSub /></SubTab>
            <SubTab><HelperSub /></SubTab>
            <SubTab><WavesSub /></SubTab>
            <SubTab><GearsSub /></SubTab>
          </SubTabs>
          <TypeRow>
            <Combo w={140} h={22}>Standard Primitiv</Combo>
          </TypeRow>
          <RollupPanel>
            <Rollup $mb={7}>
              <RollupHead>-<RollupName $pr={10}>Object Type</RollupName></RollupHead>
              <RollupBody>
                <AutoRow>AutoGrid<CheckBox /></AutoRow>
                <PrimGrid>
                  {prims.map((p) => (
                    <MaxButton key={p}>{p}</MaxButton>
                  ))}
                </PrimGrid>
              </RollupBody>
            </Rollup>
            <Rollup>
              <RollupHead>-<RollupName $pr={10}>Name and Color</RollupName></RollupHead>
              <RollupBody $pt={14}>
                <NameRow>
                  <NameField />
                  <Swatch />
                </NameRow>
              </RollupBody>
            </Rollup>
          </RollupPanel>
        </CommandPanel>
      </Work>

      <StatusStrip>
        <Prompt>
          <PinkLine />
          <ListenerLine>{"--  In line:"}</ListenerLine>
        </Prompt>
        <CoordArea>
          <CoordRow>
            <PlayIcon $ml={7}><LockIcon /></PlayIcon>
            <PlayIcon $ml={13}><AbsIcon /></PlayIcon>
            <CoordName $ml={8}>X:</CoordName>
            <CoordInput $w={56}>32.879</CoordInput>
            <CoordName $ml={15}>Y:</CoordName>
            <CoordInput $w={56}>-2.469</CoordInput>
            <CoordName $ml={15}>Z:</CoordName>
            <CoordInput $w={48}>0.0</CoordInput>
          </CoordRow>
          <PromptBoxes>
            <TextBox $w={171}>Click or click-and-drag</TextBox>
            <TextBox $w={98}>Add Time Tag</TextBox>
          </PromptBoxes>
        </CoordArea>
        <KeyButton><KeyIcon /></KeyButton>
        <KeyCol $w={50} $ml={2}>
          <KeySmall><KeyInner $ml={-5}>Auto Key</KeyInner></KeySmall>
          <KeySmall><KeyInner $ml={2}>Set Key</KeyInner></KeySmall>
        </KeyCol>
        <KeyCol $w={115} $ml={2}>
          <Combo w={115} h={21} bg="#dcdcdc">Selected</Combo>
          <KeySmall><KeyInner $ml={7}>Key Filters...</KeyInner></KeySmall>
        </KeyCol>
        <PlayArea>
          <PlayRow>
            <PlayIcon $ml={1}><Play d="M1 3 H3 V13 H1 Z M9 3 V13 L3 8 Z M15 3 V13 L9 8 Z" /></PlayIcon>
            <Separator $ml={5} />
            <PlayIcon $ml={5}><Play d="M7 3 V13 L1 8 Z M9 3 H11 V13 H9 Z M12 3 H14 V13 H12 Z" /></PlayIcon>
            <PlayIcon $ml={5}><Play box d="M5 4 L12 8 L5 12 Z" /></PlayIcon>
            <PlayIcon $ml={8}><Play d="M2 3 H4 V13 H2 Z M5 3 H7 V13 H5 Z M9 3 L15 8 L9 13 Z" /></PlayIcon>
            <Separator $ml={5} />
            <PlayIcon $ml={2}><Play d="M1 3 L7 8 L1 13 Z M7 3 L13 8 L7 13 Z M13 3 H15 V13 H13 Z" /></PlayIcon>
            <Separator $ml={9} />
            <PlayIcon $ml={2}><SearchIcon /></PlayIcon>
            <PlayIcon $ml={5}><ZoomAllIcon /></PlayIcon>
            <PlayIcon $ml={5}><CubeIcon /></PlayIcon>
            <PlayIcon $ml={5}><CubeIcon red /></PlayIcon>
          </PlayRow>
          <PlayRow>
            <PlayIcon $ml={3}><Play d="M1 3 H3 V13 H1 Z M8 4 V12 L3 8 Z M8 4 L13 8 L8 12 Z M13 3 H15 V13 H13 Z" w={14} /></PlayIcon>
            <FrameField>0</FrameField>
          </PlayRow>
        </PlayArea>
      </StatusStrip>

      <Taskbar>
        <StartButton>
          <XpFlag />
          <StartLabel>开始</StartLabel>
        </StartButton>
        <Quick>
          <ShowDesktop />
          <GoblinIcon size={17} />
          <IeIcon />
          <Chevron>»</Chevron>
        </Quick>
        <TaskButton $w={153} $mr={6}><GoblinIcon />Goblin Academy -...</TaskButton>
        <TaskButton $w={154} $mr={6}><MiniFolder />3dsmax5</TaskButton>
        <TaskButton $w={160} $mr={0} $active><MaxLogo />Untitled - 3ds m...</TaskButton>
        <TaskSpacer />
        <KeyboardTray>
          <svg width="15" height="14" viewBox="0 0 15 14">
            <path d="M3 0 C3 2 8 2 8 4" stroke="#cfe0f8" fill="none" />
            <rect x="0.5" y="4.5" width="14" height="9" fill="#e8e8e0" stroke="#333" />
            <path d="M2 7 H13 M2 9 H13 M4 11.5 H11" stroke="#333" strokeDasharray="1 1" />
          </svg>
        </KeyboardTray>
        <Tray>
          <svg width="16" height="16" viewBox="0 0 16 16">
            <circle cx="7" cy="7" r="6" fill="#9aa6b4" stroke="#3a4a5a" />
            <circle cx="7" cy="7" r="3" fill="#4a5868" />
          </svg>
          <svg width="16" height="18" viewBox="0 0 16 18">
            <path d="M8 1 L14 3 V10 C14 14 10 16 8 17 C6 16 2 14 2 10 V3 Z" fill="#70c838" stroke="#d8f0c0" />
            <path d="M6 9 H10 M8 7 V11" stroke="#fff" strokeWidth="2" />
          </svg>
          <Clock>17:52</Clock>
        </Tray>
      </Taskbar>

      <SpeedTip>
        <SpeedArrow>
          <svg width="14" height="14" viewBox="0 0 14 14"><path d="M5 2 H9 V7 H12 L7 12 L2 7 H5 Z" fill="#f4b830" /></svg>
        </SpeedArrow>
        <SpeedValue $ml={11}>2.8KB/S</SpeedValue>
        <SpeedArrow $ml={9}>
          <svg width="14" height="14" viewBox="0 0 14 14"><path d="M5 12 H9 V7 H12 L7 2 L2 7 H5 Z" fill="#20a040" /></svg>
        </SpeedArrow>
        <SpeedValue $ml={6}>0.03KB/S</SpeedValue>
      </SpeedTip>

      <Dialog>
        <DialogTitle>
          <DialogName>Select File to Export</DialogName>
          <WinButton>?</WinButton>
          <WinButton $ml={2} $red>
            <svg width="13" height="13"><path d="M2 2 L11 11 M11 2 L2 11" stroke="#fff" strokeWidth="2.4" /></svg>
          </WinButton>
        </DialogTitle>
        <DialogBody>
          <LookRow>
            <LookLabel><Cjk>保存在</Cjk>(<u>I</u>):</LookLabel>
            <Combo w={259} ml={9} bg="#fff" fs={11}>
              <FolderName><MiniFolder />Meshes</FolderName>
            </Combo>
            <NavIcon $ml={19}><BackArrow /></NavIcon>
            <NavIcon $ml={7}><UpFolder /></NavIcon>
            <NavIcon $ml={7}><NewFolder /></NavIcon>
            <NavIcon $ml={5}><ViewMenu /></NavIcon>
          </LookRow>
          <MiddleRow>
            <PlacesBar>
              {places.map(([icon, name]) => (
                <Place key={name}>{icon}<PlaceName>{name}</PlaceName></Place>
              ))}
            </PlacesBar>
            <FileColumn>
              <FileList />
              <SaveForm>
                <FormLabel><Cjk>文件名</Cjk>(<u>N</u>):</FormLabel>
                <FormCombo><Combo w={245} bg="#fff" /></FormCombo>
                <DialogButton><Cjk $fs={13}>保存</Cjk>(<u>S</u>)</DialogButton>
                <FormLabel><Cjk>保存类型</Cjk>(<u>T</u>):</FormLabel>
                <FormCombo $mt={1}><Combo w={245} h={20} fs={11}>3D Studio (*.3DS)</Combo></FormCombo>
                <DialogButton><Cjk $fs={13}>取消</Cjk></DialogButton>
              </SaveForm>
            </FileColumn>
          </MiddleRow>
        </DialogBody>
        <ResizeGrip>
          <svg width="16" height="12" viewBox="0 0 16 12">
            <path d="M15 1 L5 11 M15 5 L9 11 M15 9 L13 11" stroke="#9a9a8a" />
          </svg>
        </ResizeGrip>
        <TypeList>
          <TypeRows>
            {types.map((t, i) => (
              <TypeOption key={t} $on={i === 0}>{t}</TypeOption>
            ))}
          </TypeRows>
          <ScrollBar>
            <ScrollTop>
              <ScrollButton>
                <svg width="9" height="7"><path d="M1 5 L4.5 2 L8 5" stroke="#4a6ab0" strokeWidth="1.8" fill="none" /></svg>
              </ScrollButton>
              <ScrollThumb>
                <svg width="7" height="7"><path d="M0 1 H7 M0 3 H7 M0 5 H7" stroke="#8aa6e4" /></svg>
              </ScrollThumb>
            </ScrollTop>
            <ScrollButton>
              <svg width="9" height="7"><path d="M1 2 L4.5 5 L8 2" stroke="#4a6ab0" strokeWidth="1.8" fill="none" /></svg>
            </ScrollButton>
          </ScrollBar>
        </TypeList>
      </Dialog>
    </Screen>
  )
}
